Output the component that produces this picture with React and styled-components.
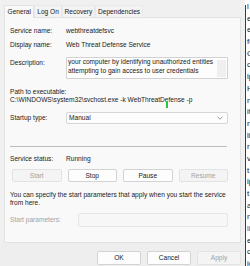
import React from "react";
import styled, { createGlobalStyle } from "styled-components";

const Global = createGlobalStyle`
  html, body { margin: 0; padding: 0; background: #ffffff; }
  body { font-family: "Liberation Sans", Arial, sans-serif; font-size: 6.6px; color: #1b1b1b; }
  * { box-sizing: border-box; }
`;

const Page = styled.div`
  display: flex;
  width: 250px;
  height: 266px;
  overflow: hidden;
`;

const Dialog = styled.div`
  width: 245px;
  flex: none;
  background: #f0f0f0;
  display: flex;
  flex-direction: column;
`;

const TabArea = styled.div`
  padding: 5px 4px 0 4px;
`;

const TabBar = styled.div`
  display: flex;
  height: 12px;
  align-items: flex-end;
`;

const Tab = styled.div`
  height: ${p => (p.$active ? "13px" : "12px")};
  padding: 0 ${p => (p.$active ? 2.5 : 1.8)}px;
  display: flex;
  align-items: center;
  line-height: 8px;
  white-space: nowrap;
  background: ${p => (p.$active ? "#f9f9f9" : "#f3f3f3")};
  border: 1px solid ${p => (p.$active ? "#e2e2e2" : "#e9e9e9")};
  border-bottom: none;
  margin-bottom: ${p => (p.$active ? "-1px" : "0")};
  position: relative;
  z-index: ${p => (p.$active ? 1 : 0)};
`;

const Panel = styled.div`
  height: 226px;
  background: #f9f9f9;
  border: 1px solid #e2e2e2;
  padding: 9px 12px 0 5px;
  display: flex;
  flex-direction: column;
`;

const Row = styled.div`
  display: flex;
  align-items: ${p => p.$align || "center"};
  margin-top: ${p => p.$mt || 0}px;
  min-height: 8px;
  line-height: 8px;
  white-space: nowrap;
  position: relative;
`;

const Label = styled.div`
  width: ${p => p.$w || 56}px;
  flex: none;
  color: ${p => (p.$disabled ? "#a3a3a3" : "#1b1b1b")};
  margin-top: ${p => p.$mt || 0}px;
`;

const Value = styled.div`
  flex: 1;
`;

const DescBox = styled.div`
  flex: 1;
  height: 22px;
  background: #fdfdfd;
  border: 1px solid #d2d2d2;
  border-radius: 1px;
  display: flex;
  overflow: hidden;
`;

const DescText = styled.div`
  flex: 1;
  padding: 0 0 0 1px;
  line-height: 8.6px;
`;

const ScrollTrack = styled.div`
  width: 9px;
  margin: 2px 1px 1px 0;
  background: #efefef;
`;

const Combo = styled.div`
  flex: 1;
  height: 12px;
  background: #fdfdfd;
  border: 1px solid #d6d6d6;
  border-radius: 2px;
  display: flex;
  align-items: center;
  justify-content: space-between;
  padding: 0 4px 0 2px;
`;

const Separator = styled.div`
  height: 1px;
  background: #bdbdbd;
  margin-top: ${p => p.$mt || 0}px;
  margin-right: 1px;
`;

const ButtonRow = styled.div`
  display: grid;
  grid-template-columns: repeat(4, 1fr);
  gap: 6px;
  margin-top: ${p => p.$mt || 0}px;
  margin-left: 2px;
`;

const Button = styled.div`
  height: ${p => p.$h || 13}px;
  width: ${p => (p.$w ? `${p.$w}px` : "auto")};
  display: flex;
  align-items: center;
  justify-content: center;
  border-radius: 2px;
  background: ${p => (p.$disabled ? "#f4f4f4" : "#fdfdfd")};
  border: 1px solid ${p => (p.$disabled ? "#e3e3e3" : "#d3d3d3")};
  color: ${p => (p.$disabled ? "#a3a3a3" : "#1b1b1b")};
  line-height: 8px;
`;

const HelpText = styled.div`
  margin-top: ${p => p.$mt || 0}px;
  line-height: 8px;
  white-space: nowrap;
`;

const ParamBox = styled.div`
  flex: 1;
  height: 14px;
  background: #f7f7f7;
  border: 1px solid #e6e6e6;
  border-radius: 2px;
`;

const Cursor = styled.div`
  position: absolute;
  left: 156px;
  top: 5px;
  width: 2px;
  height: 7px;
  background: #33c13d;
`;

const Footer = styled.div`
  flex: 1;
  display: flex;
  justify-content: flex-end;
  align-items: flex-start;
  gap: 6px;
  padding: 8px 4px 0 0;
  background: #eeeeee;
`;

const Edge = styled.div`
  width: 1px;
  flex: none;
  margin-top: 5px;
  background: #3c3c3c;
`;

const Side = styled.div`
  flex: 1;
  overflow: hidden;
  background: #ffffff;
  padding: 1px 0 0 1px;
  font-size: 8px;
  line-height: 11.68px;
  white-space: nowrap;
`;

const SideLine = styled.div`
  color: ${p => p.$color || "#1b1b1b"};
`;

const sideLines = [
  "l", "e", "es", "fo", "C", "c", "lp", "H", "ne", "it", "na",
  "li", "r", "vi", "t f", "lp", "t f", "ar", "n", "li", "er", "ce", "io",
];

function Chevron() {
  return (
    <svg width="6" height="4" viewBox="0 0 6 4">
      <path d="M0.5 0.8 L3 3.2 L5.5 0.8" fill="none" stroke="#707070" strokeWidth="0.7" />
    </svg>
  );
}

export default function App() {
  return (
    <Page>
      <Global />
      <Dialog>
        <TabArea>
          <TabBar>
            <Tab $active>General</Tab>
            <Tab>Log On</Tab>
            <Tab>Recovery</Tab>
            <Tab>Dependencies</Tab>
          </TabBar>
          <Panel>
            <Row>
              <Label>Service name:</Label>
              <Value>webthreatdefsvc</Value>
            </Row>
            <Row $mt={6}>
              <Label>Display name:</Label>
              <Value>Web Threat Defense Service</Value>
            </Row>
            <Row $mt={8} $align="flex-start">
              <Label $mt={2}>Description:</Label>
              <DescBox>
                <DescText>
                  your computer by identifying unauthorized entities
                  <br />
                  attempting to gain access to user credentials
                </DescText>
                <ScrollTrack />
              </DescBox>
            </Row>
            <Row $mt={9}>
              <Label $w={120}>Path to executable:</Label>
            </Row>
            <Row>
              <Value>C:\WINDOWS\system32\svchost.exe -k WebThreatDefense -p</Value>
              <Cursor />
            </Row>
            <Row $mt={8}>
              <Label>Startup type:</Label>
              <Combo>
                <span>Manual</span>
                <Chevron />
              </Combo>
            </Row>
            <Separator $mt={22} />
            <Row $mt={8}>
              <Label>Service status:</Label>
              <Value>Running</Value>
            </Row>
            <ButtonRow $mt={6}>
              <Button $disabled>Start</Button>
              <Button>Stop</Button>
              <Button>Pause</Button>
              <Button $disabled>Resume</Button>
            </ButtonRow>
            <HelpText $mt={9}>
              You can specify the start parameters that apply when you start the service
              <br />
              from here.
            </HelpText>
            <Row $mt={6}>
              <Label $w={68} $disabled>Start parameters:</Label>
              <ParamBox />
            </Row>
          </Panel>
        </TabArea>
        <Footer>
          <Button $w={44} $h={14}>OK</Button>
          <Button $w={44} $h={14}>Cancel</Button>
          <Button $w={44} $h={14} $disabled>Apply</Button>
        </Footer>
      </Dialog>
      <Edge />
      <Side>
        {sideLines.map((t, i) => (
          <SideLine key={i} $color={i === 19 ? "#8b3a4a" : undefined}>{t}</SideLine>
        ))}
      </Side>
    </Page>
  );
}
